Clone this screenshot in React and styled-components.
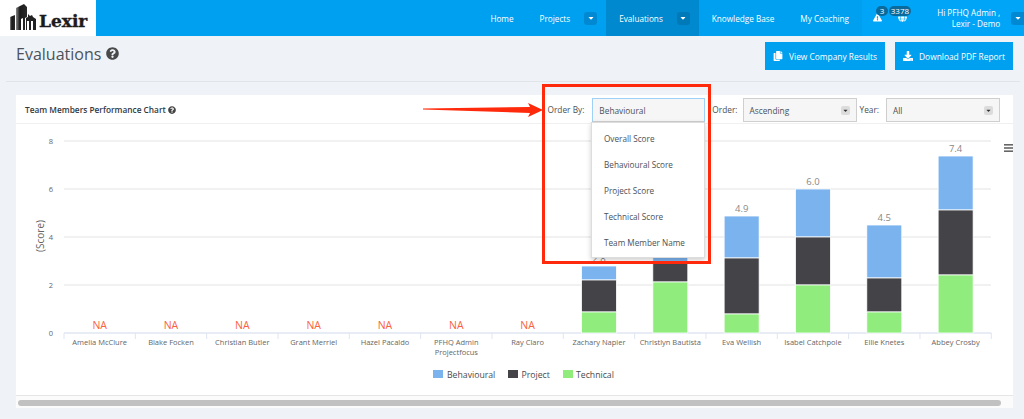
import React from 'react';
import styled, { createGlobalStyle } from 'styled-components';
import { FaQuestionCircle, FaExclamationTriangle, FaGlobe, FaCopy, FaDownload, FaCaretDown } from 'react-icons/fa';

const GlobalStyle = createGlobalStyle`
  html, body { margin: 0; padding: 0; background: #eff3f8; overflow: hidden; }
  body { font-family: "Open Sans", "Liberation Sans", sans-serif; }
`;

const Page = styled.div`
  position: relative;
  width: 1024px;
  height: 419px;
  overflow: hidden;
`;

const Header = styled.header`
  display: flex;
  height: 36px;
  background: #00a0f0;
  color: #fff;
  font-size: 8.2px;
  font-weight: 500;
`;

const LogoBox = styled.div`
  display: flex;
  align-items: flex-end;
  width: 96px;
  padding: 0 0 7px 10px;
  box-sizing: border-box;
  background: #fff;
  margin-right: auto;
`;

const LogoText = styled.span`
  font-family: "DejaVu Serif", serif;
  font-size: 17px;
  line-height: 15px;
  font-weight: 700;
  color: #1c1c1c;
  margin-left: 2px;
  -webkit-text-stroke: 0.4px #1c1c1c;
`;

const NavItem = styled.div`
  display: flex;
  align-items: center;
  padding: ${p => (p.$hasCaret ? '0 9px 0 13px' : '0 13px')};
  background: ${p => (p.$active ? '#0089ce' : 'transparent')};
`;

const CaretBox = styled.span`
  display: flex;
  align-items: center;
  justify-content: center;
  width: 13px;
  height: 13px;
  margin-left: 14px;
  border-radius: 3px;
  background: ${p => (p.$active ? '#0079b8' : '#0089d2')};
  font-size: 8px;
`;

const UserPanel = styled.div`
  display: flex;
  align-items: center;
  width: 162px;
  background: #00a5f7;
`;

const AlertIcon = styled.span`
  position: relative;
  display: flex;
  width: ${p => p.$width}px;
  margin-left: ${p => p.$left}px;
  padding-top: 13px;
  height: 23px;
  font-size: 9px;
`;

const Badge = styled.span`
  position: absolute;
  top: 6px;
  left: ${p => p.$left}px;
  min-width: 12px;
  height: 10px;
  padding: 0 2px;
  box-sizing: border-box;
  border-radius: 6px;
  background: #0a6a9c;
  font-size: 8px;
  line-height: 10px;
  text-align: center;
`;

const UserName = styled.div`
  width: 74px;
  margin-left: 7px;
  text-align: right;
  line-height: 11px;
  white-space: nowrap;
`;

const UserCaret = styled(CaretBox)`
  margin-left: 11px;
  width: 14px;
  border-radius: 3px 0 0 3px;
`;

const TitleRow = styled.div`
  display: flex;
  justify-content: space-between;
  height: 46px;
  margin: 0 4px 0 6px;
  padding: 6px 7px 0 10px;
  box-sizing: border-box;
  border-bottom: 1px solid #e1e5ea;
`;

const PageTitle = styled.h1`
  display: flex;
  align-items: center;
  gap: 5px;
  height: 23px;
  margin: 0;
  font-size: 16px;
  font-weight: 400;
  color: #4c5258;
  svg { font-size: 13px; color: #4a4a4a; }
`;

const ButtonGroup = styled.div`
  display: flex;
  gap: 10px;
`;

const ActionButton = styled.div`
  display: flex;
  align-items: center;
  gap: 6px;
  width: ${p => p.$width}px;
  height: 28px;
  justify-content: center;
  box-sizing: border-box;
  background: #00a0f0;
  color: #fff;
  font-size: 8.4px;
  font-weight: 500;
  svg { font-size: 10px; }
`;

const Card = styled.section`
  display: flex;
  flex-direction: column;
  height: 313px;
  margin: 13px 11px 0 16px;
  background: #fff;
`;

const CardHeader = styled.div`
  display: flex;
  align-items: center;
  height: 29px;
  padding: 1px 13px 0 0;
  box-sizing: border-box;
  border-bottom: 1px solid #f0f0f0;
`;

const CardTitle = styled.div`
  display: flex;
  align-items: center;
  gap: 2px;
  margin: 0 auto 0 9px;
  font-size: 8.3px;
  font-weight: 600;
  color: #33383d;
  svg { font-size: 8px; color: #444; }
`;

const FieldLabel = styled.span`
  font-size: 8.3px;
  color: #4b5157;
  margin-right: ${p => p.$gap}px;
`;

const Select = styled.div`
  display: flex;
  align-items: center;
  justify-content: space-between;
  width: ${p => p.$width}px;
  height: 24px;
  margin-right: ${p => p.$after || 0}px;
  padding: 1px 6px 0 6px;
  box-sizing: border-box;
  background: #f6f6f6;
  border: 1px solid ${p => (p.$open ? '#9fd0f7' : '#cfcfcf')};
  border-bottom-color: #cfcfcf;
  font-size: 8.3px;
  color: #4b5157;
`;

const SelectCaret = styled.span`
  display: flex;
  align-items: center;
  justify-content: center;
  width: 9px;
  height: 9px;
  border-radius: 2px;
  background: #dcdcdc;
  color: #333;
  font-size: 7px;
`;

const ChartSvg = styled.svg`
  display: block;
  width: 997px;
  height: 271px;
  flex: none;
  text { font-family: "Open Sans", "Liberation Sans", sans-serif; }
`;

const ScrollTrack = styled.div`
  flex: 1;
  padding: 4px 12px 0 2px;
  border-top: 1px solid #e6e6e6;
  background: #fbfbfb;
`;

const ScrollThumb = styled.div`
  height: 6px;
  border-radius: 3px;
  background: #c1c1c1;
`;

const Menu = styled.ul`
  position: absolute;
  top: 122px;
  left: 591px;
  width: 114px;
  height: 136px;
  margin: 0;
  padding: 3px 0 0;
  box-sizing: border-box;
  list-style: none;
  background: #fff;
  border: 1px solid #ddd;
  box-shadow: 0 2px 5px rgba(0, 0, 0, 0.2);
`;

const MenuItem = styled.li`
  height: 26px;
  padding-left: 12px;
  font-size: 8.2px;
  line-height: 26px;
  color: #4b5157;
`;

const Callout = styled.div`
  position: absolute;
  top: 84px;
  left: 542px;
  width: 169px;
  height: 180px;
  box-sizing: border-box;
  border: 3px solid #ff2a0c;
`;

const Arrow = styled.svg`
  position: absolute;
  top: 100px;
  left: 420px;
`;

const names = [
  ['Amelia McClure'], ['Blake Focken'], ['Christian Butler'], ['Grant Merriel'], ['Hazel Pacaldo'],
  ['PFHQ Admin', 'Projectfocus'], ['Ray Claro'], ['Zachary Napier'], ['Christlyn Bautista'],
  ['Eva Wellish'], ['Isabel Catchpole'], ['Ellie Knetes'], ['Abbey Crosby'],
];

// y pixel of top, blue/dark edge, dark/green edge per bar
const bars = {
  7: { label: '2.8', top: 267, dark: 281, green: 313 },
  8: { label: '3.9', top: 240, dark: 264, green: 283 },
  9: { label: '4.9', top: 217, dark: 259, green: 315 },
  10: { label: '6.0', top: 190, dark: 238, green: 286 },
  11: { label: '4.5', top: 226, dark: 279, green: 313 },
  12: { label: '7.4', top: 157, dark: 211, green: 276 },
};

const BLUE = '#7ab3ee';
const DARK = '#434348';
const GREEN = '#90ed7d';
const X0 = 64;
const STEP = 71.33;
const BASE = 334;

const Chart = () => (
  <ChartSvg viewBox="16 125 997 271">
    {[142, 190, 238, 286].map(y => (
      <line key={y} x1={X0} x2={991} y1={y} y2={y} stroke="#ececec" strokeWidth="1.5" />
    ))}
    {[8, 6, 4, 2, 0].map((v, i) => (
      <text key={v} x="53" y={144.5 + i * 48} fontSize="7.5" fill="#666" textAnchor="end">{v}</text>
    ))}
    <text transform="translate(44 237) rotate(-90)" fontSize="10" fill="#666" textAnchor="middle">(Score)</text>

    <line x1={X0} x2={991.3} y1={BASE} y2={BASE} stroke="#dfe6f2" strokeWidth="1.5" />
    {names.map((_, i) => (
      <line key={i} x1={X0 + i * STEP} x2={X0 + i * STEP} y1={BASE} y2={340} stroke="#dfe6f2" />
    ))}
    <line x1={991.3} x2={991.3} y1={BASE} y2={340} stroke="#dfe6f2" />

    {names.map((lines, i) => {
      const cx = X0 + (i + 0.5) * STEP;
      const b = bars[i];
      return (
        <g key={lines[0]}>
          {lines.map((l, j) => (
            <text key={l} x={cx} y={346 + j * 10} fontSize="7.5" fill="#666" textAnchor="middle">{l}</text>
          ))}
          {b ? (
            <g stroke="#fff" strokeWidth="0.8">
              <rect x={cx - 17.5} y={b.top} width="35" height={b.dark - b.top} fill={BLUE} />
              <rect x={cx - 17.5} y={b.dark} width="35" height={b.green - b.dark} fill={DARK} />
              <rect x={cx - 17.5} y={b.green} width="35" height={BASE - b.green} fill={GREEN} />
              <text x={cx} y={b.top - 4} fontSize="9.5" fill="#888" stroke="none" textAnchor="middle">{b.label}</text>
            </g>
          ) : (
            <text x={cx} y="330" fontSize="10.5" fill="#f9623e" textAnchor="middle">NA</text>
          )}
        </g>
      );
    })}

    <rect x="433" y="371" width="10" height="8" fill={BLUE} />
    <text x="447" y="378.5" fontSize="8.7" fill="#4a4a4a">Behavioural</text>
    <rect x="508" y="371" width="10" height="8" fill={DARK} />
    <text x="521.5" y="378.5" fontSize="8.7" fill="#4a4a4a">Project</text>
    <rect x="563" y="371" width="10" height="8" fill={GREEN} />
    <text x="576" y="378.5" fontSize="8.7" fill="#4a4a4a">Technical</text>

    <g fill="#666">
      <rect x="1004" y="145" width="9" height="1.6" />
      <rect x="1004" y="148.2" width="9" height="1.6" />
      <rect x="1004" y="151.4" width="9" height="1.6" />
    </g>
  </ChartSvg>
);

const Logo = () => (
  <LogoBox>
    <svg width="27" height="27" viewBox="0 0 27 27" style={{ marginBottom: -1 }}>
      <defs>
        <linearGradient id="tower" x1="0" x2="1" y1="0" y2="0">
          <stop offset="0" stopColor="#8a8a8a" />
          <stop offset="0.35" stopColor="#1a1a1a" />
          <stop offset="1" stopColor="#2a2a2a" />
        </linearGradient>
      </defs>
      <path d="M0 27V14l5-2v15z" fill="url(#tower)" />
      <path d="M6 27V5l8-4 3 3v10l-2 1v12h-2V15l-2 1v11z" fill="url(#tower)" />
      <path d="M16 27V15l2-1v-3l2 2 2-1 1 2 3 2v11h-3V18h-2v9h-2V18h-2v9z" fill="#222" />
    </svg>
    <LogoText>Lexir</LogoText>
  </LogoBox>
);

export default function App() {
  return (
    <Page>
      <GlobalStyle />
      <Header>
        <Logo />
        <NavItem>Home</NavItem>
        <NavItem $hasCaret>Projects<CaretBox><FaCaretDown /></CaretBox></NavItem>
        <NavItem $hasCaret $active>Evaluations<CaretBox $active><FaCaretDown /></CaretBox></NavItem>
        <NavItem>Knowledge Base</NavItem>
        <NavItem>My Coaching</NavItem>
        <UserPanel>
          <AlertIcon $left={11} $width={27}>
            <FaExclamationTriangle />
            <Badge $left={3}>3</Badge>
          </AlertIcon>
          <AlertIcon $left={0} $width={30}>
            <FaGlobe />
            <Badge $left={-9}>3378</Badge>
          </AlertIcon>
          <UserName>Hi PFHQ Admin ,<br />Lexir - Demo</UserName>
          <UserCaret><FaCaretDown /></UserCaret>
        </UserPanel>
      </Header>

      <TitleRow>
        <PageTitle>Evaluations <FaQuestionCircle /></PageTitle>
        <ButtonGroup>
          <ActionButton $width={120}><FaCopy />View Company Results</ActionButton>
          <ActionButton $width={118}><FaDownload />Download PDF Report</ActionButton>
        </ButtonGroup>
      </TitleRow>

      <Card>
        <CardHeader>
          <CardTitle>Team Members Performance Chart<FaQuestionCircle /></CardTitle>
          <FieldLabel $gap={8}>: Order By:</FieldLabel>
          <Select $width={113} $open $after={7}>Behavioural</Select>
          <FieldLabel $gap={5}>Order:</FieldLabel>
          <Select $width={114} $after={3}>Ascending<SelectCaret><FaCaretDown /></SelectCaret></Select>
          <FieldLabel $gap={7}>Year:</FieldLabel>
          <Select $width={114}>All<SelectCaret><FaCaretDown /></SelectCaret></Select>
        </CardHeader>
        <Chart />
        <ScrollTrack><ScrollThumb /></ScrollTrack>
      </Card>

      <Menu>
        <MenuItem>Overall Score</MenuItem>
        <MenuItem>Behavioural Score</MenuItem>
        <MenuItem>Project Score</MenuItem>
        <MenuItem>Technical Score</MenuItem>
        <MenuItem>Team Member Name</MenuItem>
      </Menu>
      <Callout />
      <Arrow width="125" height="20" viewBox="0 0 125 20">
        <path d="M3 8.6 L110 7 L108 3 L123 10 L108 17 L110 13 L3 9.6 Z" fill="#ff2a0c" />
      </Arrow>
    </Page>
  );
}
